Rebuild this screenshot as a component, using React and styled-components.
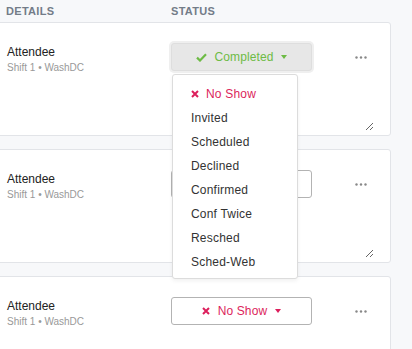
import React from "react";
import styled, { createGlobalStyle } from "styled-components";

const Global = createGlobalStyle`
  html, body { margin: 0; padding: 0; }
  body {
    background: #f7f8fa;
    font-family: "Liberation Sans", Arial, sans-serif;
    overflow: hidden;
  }
`;

const Page = styled.div`
  width: 412px;
  height: 349px;
  overflow: hidden;
  background: #f7f8fa;
`;

const Header = styled.div`
  display: grid;
  grid-template-columns: 165px 1fr;
  height: 22px;
  align-items: center;
  padding-left: 6px;
  font-size: 11px;
  font-weight: 700;
  letter-spacing: 0.3px;
  color: #737c88;
  text-transform: uppercase;
`;

const List = styled.div`
  display: flex;
  flex-direction: column;
  gap: 13px;
`;

const Card = styled.div`
  box-sizing: border-box;
  width: 395px;
  margin-left: -4px;
  height: 114px;
  background: #fff;
  border: 1px solid #e2e4e8;
  border-radius: 3px;
  padding: 20px 0 10px 10px;
  display: grid;
  grid-template-columns: 164px 141px 1fr;
  grid-template-rows: auto auto;
  align-content: start;
  align-items: start;
`;

const Details = styled.div`
  padding-top: 1px;
`;

const Name = styled.div`
  font-size: 12px;
  line-height: 16px;
  color: #222;
`;

const Sub = styled.div`
  font-size: 10px;
  line-height: 16px;
  color: #999;
`;

const StatusCell = styled.div`
  position: relative;
  height: 28px;
`;

const StatusButton = styled.button`
  box-sizing: border-box;
  width: 141px;
  height: 28px;
  display: flex;
  align-items: center;
  justify-content: center;
  gap: 8px;
  font-family: inherit;
  font-size: 12px;
  letter-spacing: 0.1px;
  border-radius: 3px;
  cursor: pointer;
  padding: 0;
  color: ${(p) => p.$color};
  background: ${(p) => (p.$active ? "#e7e7e7" : "#fff")};
  border: 1px solid ${(p) => (p.$active ? "#dedede" : "#b3b3b3")};
  box-shadow: ${(p) => (p.$active ? "0 0 0 2px #efefef" : "none")};
`;

const Caret = styled.span`
  width: 0;
  height: 0;
  border-left: 3.5px solid transparent;
  border-right: 3.5px solid transparent;
  border-top: 4px solid currentColor;
`;

const Menu = styled.div`
  position: absolute;
  top: 31px;
  left: 1px;
  width: 126px;
  box-sizing: border-box;
  background: #fff;
  border: 1px solid #dcdcdc;
  border-radius: 3px;
  box-shadow: 0 2px 4px rgba(0, 0, 0, 0.06);
  padding: 7px 0 4px;
  z-index: 10;
`;

const MenuItem = styled.div`
  height: 24px;
  display: flex;
  align-items: center;
  gap: 7px;
  padding-left: 18px;
  font-size: 12px;
  color: ${(p) => p.$color || "#333"};
  letter-spacing: 0.2px;
`;

const More = styled.div`
  display: flex;
  align-items: center;
  height: 28px;
  padding-left: 43px;
  color: #888;
`;

const Notes = styled.textarea`
  grid-column: 2 / 4;
  width: 203px;
  height: 48px;
  margin-top: 7px;
  border: none;
  outline: none;
  padding: 0;
  background: transparent;
  resize: vertical;
  font-family: inherit;
`;

const Check = () => (
  <svg width="11" height="9" viewBox="0 0 11 9">
    <path d="M1 4.6 L4 7.5 L10 1.3" fill="none" stroke="currentColor" strokeWidth="2.2" />
  </svg>
);

const Cross = () => (
  <svg width="8" height="8" viewBox="0 0 8 8">
    <path d="M1 1 L7 7 M7 1 L1 7" fill="none" stroke="currentColor" strokeWidth="2" />
  </svg>
);

const Dots = () => (
  <svg width="12" height="3" viewBox="0 0 12 3">
    <circle cx="1.5" cy="1.5" r="1.2" fill="currentColor" />
    <circle cx="6" cy="1.5" r="1.2" fill="currentColor" />
    <circle cx="10.5" cy="1.5" r="1.2" fill="currentColor" />
  </svg>
);

const GREEN = "#6dbb45";
const RED = "#dc1f5c";

const options = ["Invited", "Scheduled", "Declined", "Confirmed", "Conf Twice", "Resched", "Sched-Web"];

const rows = [
  { status: "Completed", icon: <Check />, color: GREEN, active: true, open: true },
  { status: "", icon: null, color: "#333", active: false, open: false },
  { status: "No Show", icon: <Cross />, color: RED, active: false, open: false },
];

export default function App() {
  return (
    <Page>
      <Global />
      <Header>
        <span>Details</span>
        <span>Status</span>
      </Header>
      <List>
        {rows.map((r, i) => (
          <Card key={i}>
            <Details>
              <Name>Attendee</Name>
              <Sub>Shift 1 • WashDC</Sub>
            </Details>
            <StatusCell>
              <StatusButton $color={r.color} $active={r.active}>
                {r.icon}
                {r.status && <span>{r.status}</span>}
                {r.status && <Caret />}
              </StatusButton>
              {r.open && (
                <Menu>
                  <MenuItem $color={RED}>
                    <Cross />
                    No Show
                  </MenuItem>
                  {options.map((o) => (
                    <MenuItem key={o}>{o}</MenuItem>
                  ))}
                </Menu>
              )}
            </StatusCell>
            <More>
              <Dots />
            </More>
            {i < 2 && <Notes />}
          </Card>
        ))}
      </List>
    </Page>
  );
}
